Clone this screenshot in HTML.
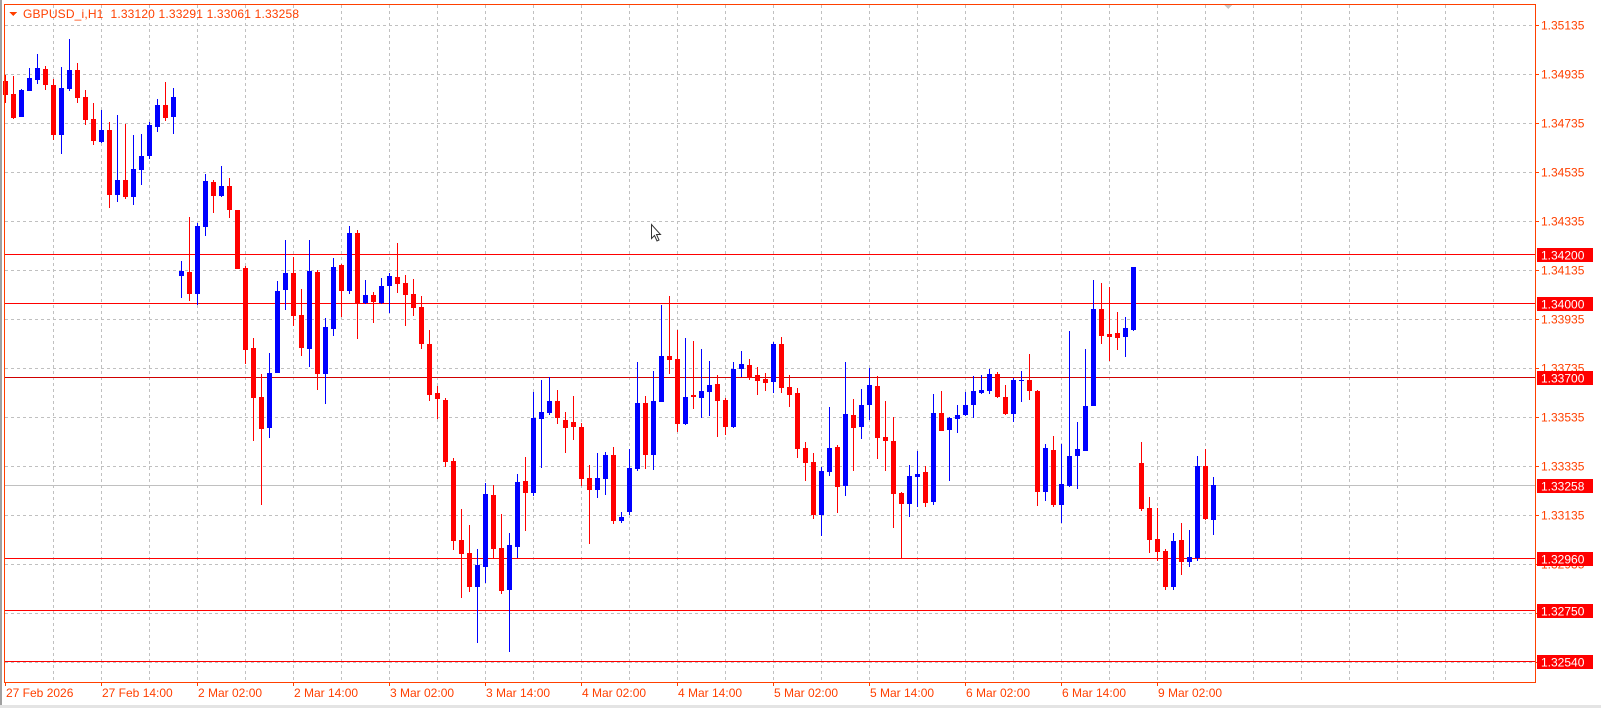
<!DOCTYPE html>
<html><head><meta charset="utf-8"><style>
html,body{margin:0;padding:0;background:#fff;}
body{width:1601px;height:708px;overflow:hidden;position:relative;font-family:"Liberation Sans",sans-serif;}
svg{position:absolute;left:0;top:0;}
</style></head><body>
<svg id="s" width="1601" height="708" xmlns="http://www.w3.org/2000/svg" shape-rendering="crispEdges" font-family="Liberation Sans, sans-serif">
<rect x="0" y="0" width="1601" height="708" fill="#fff"/>
<rect x="0" y="705" width="1601" height="3" fill="#e4e4e4"/>
<rect x="0" y="0" width="2" height="705" fill="#a0a0a0"/>
<g id="grid" stroke="#c0c0c0" stroke-width="1" stroke-dasharray="3,3"></g>
<g id="lv"></g>
<g id="c"></g>
<rect x="4.5" y="4.5" width="1531" height="678" fill="none" stroke="#ff4000" stroke-width="1"/>
<g id="ax" font-size="12" fill="#ff4000"></g>
<g id="lab"></g>
<polygon points="9,12 17,12 13,16" fill="#ff4000"/>
<text x="23" y="18" font-size="12" fill="#ff4000" style="white-space:pre" textLength="276" lengthAdjust="spacing">GBPUSD_i,H1  1.33120 1.33291 1.33061 1.33258</text>
<polygon points="1224,5 1232,5 1228,9" fill="#c8c8c8"/>
<path d="M651.5 224.5 L651.5 238.5 L654.5 235.5 L657 241 L659 240 L656.5 234.5 L660.5 234.5 Z" fill="#fff" stroke="#333" stroke-width="1" shape-rendering="auto"/>
</svg>
<script>
var NS="http://www.w3.org/2000/svg";
function el(p,t,a,txt){var e=document.createElementNS(NS,t);for(var k in a)e.setAttribute(k,a[k]);if(txt)e.textContent=txt;document.getElementById(p).appendChild(e);return e;}
for(var x=53;x<1535;x+=48)el("grid","line",{x1:x+0.5,y1:5,x2:x+0.5,y2:682});
for(var k=0;k<14;k++){var y=Math.round(25.3+49*k)+0.5;el("grid","line",{x1:5,y1:y,x2:1535,y2:y});}
var prices=["1.35135","1.34935","1.34735","1.34535","1.34335","1.34135","1.33935","1.33735","1.33535","1.33335","1.33135","1.32935","1.32735","1.32535"];
for(var k=0;k<14;k++){var y=Math.round(25.3+49*k);el("ax","rect",{x:1535,y:y,width:4,height:1,fill:"#ff4000"});el("ax","text",{x:1541,y:y+4.5},prices[k]);}
var tl=["27 Feb 2026","27 Feb 14:00","2 Mar 02:00","2 Mar 14:00","3 Mar 02:00","3 Mar 14:00","4 Mar 02:00","4 Mar 14:00","5 Mar 02:00","5 Mar 14:00","6 Mar 02:00","6 Mar 14:00","9 Mar 02:00"];
for(var k=0;k<13;k++){var x=5+96*k;el("ax","rect",{x:x,y:682,width:1,height:4,fill:"#ff4000"});el("ax","text",{x:x+1,y:697},tl[k]);}
function yp(p){return 270.3+(1.34135-p)*24500;}
var lv=[["1.34200",1.342],["1.34000",1.340],["1.33700",1.337],["1.32960",1.3296],["1.32750",1.3275],["1.32540",1.3254]];
var yb=Math.round(yp(1.33258))+0.5;
el("lv","line",{x1:5,y1:yb,x2:1535,y2:yb,stroke:"#c0c0c0","stroke-width":1});
lv.forEach(function(l){var y=Math.round(yp(l[1]))+0.5;el("lv","line",{x1:5,y1:y,x2:1535,y2:y,stroke:l[0]=="1.33700"?"#d00000":"#ff0000","stroke-width":1});
el("lab","rect",{x:1537,y:Math.round(y)-7,width:56,height:14,fill:"#ff0000"});el("lab","text",{x:1541,y:Math.round(y)+4.5,"font-size":12,fill:"#fff"},l[0]);});
el("lab","rect",{x:1537,y:Math.round(yb)-7,width:56,height:14,fill:"#ff0000"});el("lab","text",{x:1541,y:Math.round(yb)+4.5,"font-size":12,fill:"#fff"},"1.33258");
var d=[
[0,75,103,81,95],[0,76,119,94,118],[1,89,117,90,117],[1,68,91,78,91],[1,54,84,68,80],[0,66,90,69,85],[0,79,140,85,135],[1,67,154,88,135],[1,39,91,70,89],[0,63,103,70,98],
[0,90,125,97,120],[0,103,145,119,141],[1,110,143,130,142],[0,122,208,130,195],[1,115,202,180,195],[0,124,199,180,197],[1,135,205,169,197],[1,134,185,156,170],[1,122,159,125,156],[1,99,132,105,127],
[0,82,121,105,118],[1,88,134,97,117],[1,261,298,271,276],[0,217,301,272,294],[1,223,305,226,294],[1,174,236,181,227],[0,180,213,182,196],[1,166,197,186,196],[0,178,218,186,210],[0,210,269,210,269],
[0,266,364,268,350],[0,338,441,348,398],[0,374,505,397,429],[1,353,438,373,428],[1,281,373,291,373],[1,240,310,273,290],[0,257,326,273,316],[0,289,356,315,348],[1,240,367,271,349],[0,270,390,272,374],
[1,318,404,327,374],[1,258,336,267,329],[0,264,317,265,291],[1,226,294,233,291],[0,230,339,233,303],[1,280,304,295,303],[0,292,323,295,302],[1,278,304,286,303],[1,273,313,276,286],[0,243,293,277,284],
[0,275,326,283,295],[0,279,316,294,308],[0,296,349,307,344],[0,330,401,344,395],[0,386,419,393,399],[0,398,467,400,462],[0,458,550,461,541],[0,509,598,540,554],[0,525,592,553,587],[1,549,643,565,587],
[1,483,583,494,567],[0,485,559,495,549],[0,514,594,548,591],[1,533,652,545,590],[1,474,558,482,547],[0,457,531,481,493],[1,392,496,418,493],[1,380,468,412,419],[1,377,415,401,413],[0,390,424,401,418],
[0,412,453,420,428],[0,396,440,422,427],[0,423,486,427,479],[0,465,544,478,490],[1,453,498,478,490],[1,452,495,455,479],[0,447,524,455,521],[1,512,523,517,521],[1,449,515,468,512],[1,362,471,403,469],
[0,396,469,403,455],[1,371,470,401,455],[1,305,402,356,402],[0,296,374,356,360],[0,330,432,359,424],[1,338,425,397,424],[0,341,409,395,397],[1,349,418,391,398],[1,361,416,385,392],[0,375,437,384,401],
[0,398,435,400,427],[1,362,428,369,427],[1,351,377,364,369],[0,359,380,365,378],[0,367,395,375,381],[0,373,391,379,383],[1,342,393,344,382],[0,337,393,344,388],[0,375,407,387,395],[0,388,458,393,449],
[0,442,481,448,463],[0,453,519,462,515],[1,467,536,471,515],[1,407,476,448,472],[0,445,513,447,487],[1,362,496,414,486],[0,399,471,415,428],[1,389,439,405,427],[1,368,420,385,405],[0,376,459,386,438],
[0,401,471,437,441],[0,417,528,441,494],[0,492,558,493,504],[1,465,517,476,504],[1,451,507,474,477],[0,466,507,472,503],[1,394,505,413,502],[0,391,431,413,431],[1,417,481,418,430],[1,405,433,415,419],
[1,392,416,405,415],[1,376,418,391,405],[1,375,394,390,393],[1,369,394,374,391],[0,372,398,374,397],[0,385,415,397,414],[1,378,422,380,414],[1,371,402,380,381],[0,354,400,380,391],[0,390,506,391,492],
[1,444,501,448,492],[0,436,507,450,505],[1,444,523,484,505],[1,331,487,456,486],[1,422,489,449,456],[1,349,451,406,451],[1,280,406,309,406],[0,283,344,309,336],[0,287,361,334,337],[0,312,350,333,338],
[1,317,357,328,337],[1,267,331,267,330],[0,442,511,463,509],[0,497,553,508,540],[0,508,561,539,552],[0,549,590,551,587],[1,533,590,541,587],[0,523,575,540,562],[1,530,567,557,562],[1,456,561,466,558],
[0,449,520,466,519],[1,477,535,485,520]
];
d.forEach(function(c,i){var col=c[0]?"#0000ff":"#ff0000";var x=3+8*i;
el("c","rect",{x:x+2,y:c[1],width:1,height:Math.max(1,c[2]-c[1]),fill:col});
el("c","rect",{x:x,y:c[3],width:5,height:Math.max(1,c[4]-c[3]),fill:col});});
</script>
</body></html>
